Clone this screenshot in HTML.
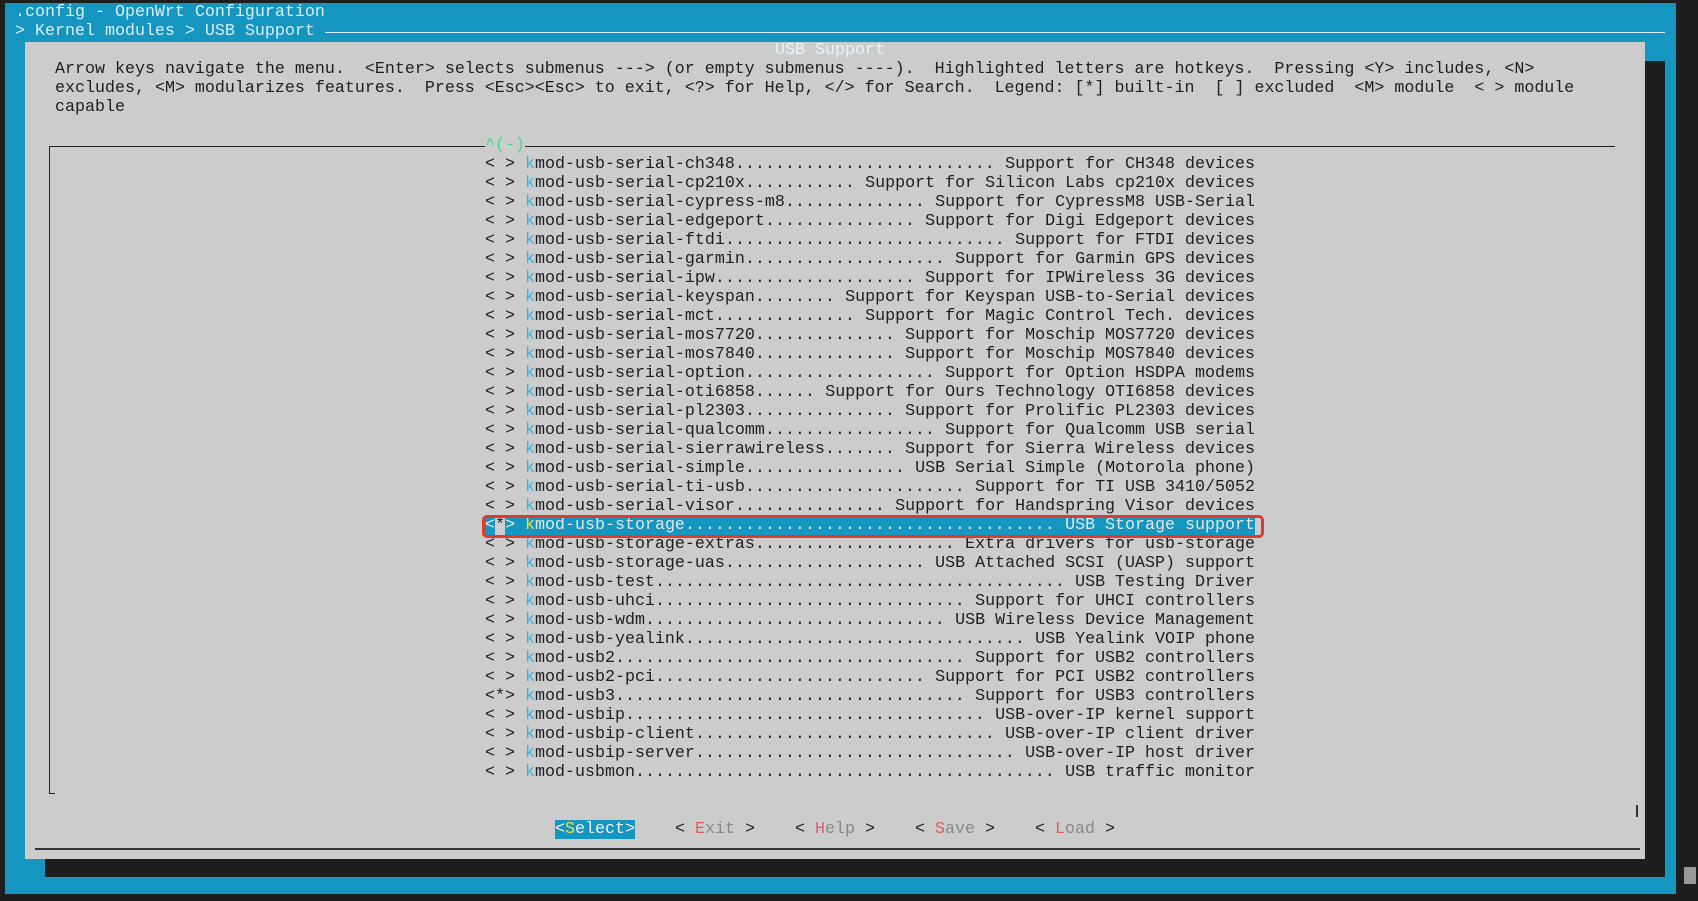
<!DOCTYPE html>
<html><head><meta charset="utf-8"><style>
*{margin:0;padding:0;box-sizing:border-box}
body{width:1698px;height:901px;background:#1e1e1e;position:relative;overflow:hidden;font-family:"Liberation Mono","DejaVu Sans Mono",monospace;font-size:16.67px;line-height:19px;color:#1e1e1e}
.t{position:absolute;white-space:pre;height:19px}
.r{position:absolute;left:485px;width:770px;height:19px;display:flex;white-space:pre}
.r i{font-style:normal;flex:1;overflow:hidden;white-space:nowrap}
.r b{font-weight:normal;color:#3cb0dc}
.lt{color:#d8eef6}
</style></head><body>
<div style="position:absolute;left:5px;top:3px;width:1671px;height:891px;background:#1596c0"></div>
<div style="position:absolute;left:1676px;top:0;width:22px;height:901px;background:#1e1e1e"></div>
<div style="position:absolute;left:1684px;top:867px;width:12px;height:17px;background:#999"></div>
<div class="t lt" style="left:15px;top:3px">.config - OpenWrt Configuration</div>
<div class="t lt" style="left:15px;top:22px">&gt; Kernel modules &gt; USB Support</div>
<div style="position:absolute;left:325px;top:32px;width:1340px;height:1px;background:#d8eef6"></div>
<!-- shadow -->
<div style="position:absolute;left:45px;top:61px;width:1620px;height:816px;background:#1e1e1e"></div>
<!-- dialog -->
<div style="position:absolute;left:25px;top:42px;width:1620px;height:817px;background:#cccccc"></div>
<div style="position:absolute;left:35px;top:848px;width:1605px;height:2px;background:#333"></div>
<div style="position:absolute;left:1636px;top:805px;width:2px;height:12px;background:#333"></div>
<div class="t" style="left:775px;top:41px;color:#e8f4fa">USB Support</div>
<div class="t" style="left:55px;top:60px">Arrow keys navigate the menu.  &lt;Enter&gt; selects submenus ---&gt; (or empty submenus ----).  Highlighted letters are hotkeys.  Pressing &lt;Y&gt; includes, &lt;N&gt;</div>
<div class="t" style="left:55px;top:79px">excludes, &lt;M&gt; modularizes features.  Press &lt;Esc&gt;&lt;Esc&gt; to exit, &lt;?&gt; for Help, &lt;/&gt; for Search.  Legend: [*] built-in  [ ] excluded  &lt;M&gt; module  &lt; &gt; module</div>
<div class="t" style="left:55px;top:98px">capable</div>
<!-- menu box -->
<div style="position:absolute;left:49px;top:146px;width:436px;height:1px;background:#222"></div>
<div style="position:absolute;left:525px;top:146px;width:1090px;height:1px;background:#222"></div>
<div class="t" style="left:485px;top:136px;color:#3fd98a">^(-)</div>
<div style="position:absolute;left:49px;top:146px;width:1px;height:648px;background:#222"></div>
<div style="position:absolute;left:49px;top:793px;width:6px;height:1px;background:#222"></div>

<div class="r" style="top:155px"><span>&lt; &gt; </span><b>k</b>mod-usb-serial-ch348<i>................................................................................</i><span> Support for CH348 devices</span></div>
<div class="r" style="top:174px"><span>&lt; &gt; </span><b>k</b>mod-usb-serial-cp210x<i>................................................................................</i><span> Support for Silicon Labs cp210x devices</span></div>
<div class="r" style="top:193px"><span>&lt; &gt; </span><b>k</b>mod-usb-serial-cypress-m8<i>................................................................................</i><span> Support for CypressM8 USB-Serial</span></div>
<div class="r" style="top:212px"><span>&lt; &gt; </span><b>k</b>mod-usb-serial-edgeport<i>................................................................................</i><span> Support for Digi Edgeport devices</span></div>
<div class="r" style="top:231px"><span>&lt; &gt; </span><b>k</b>mod-usb-serial-ftdi<i>................................................................................</i><span> Support for FTDI devices</span></div>
<div class="r" style="top:250px"><span>&lt; &gt; </span><b>k</b>mod-usb-serial-garmin<i>................................................................................</i><span> Support for Garmin GPS devices</span></div>
<div class="r" style="top:269px"><span>&lt; &gt; </span><b>k</b>mod-usb-serial-ipw<i>................................................................................</i><span> Support for IPWireless 3G devices</span></div>
<div class="r" style="top:288px"><span>&lt; &gt; </span><b>k</b>mod-usb-serial-keyspan<i>................................................................................</i><span> Support for Keyspan USB-to-Serial devices</span></div>
<div class="r" style="top:307px"><span>&lt; &gt; </span><b>k</b>mod-usb-serial-mct<i>................................................................................</i><span> Support for Magic Control Tech. devices</span></div>
<div class="r" style="top:326px"><span>&lt; &gt; </span><b>k</b>mod-usb-serial-mos7720<i>................................................................................</i><span> Support for Moschip MOS7720 devices</span></div>
<div class="r" style="top:345px"><span>&lt; &gt; </span><b>k</b>mod-usb-serial-mos7840<i>................................................................................</i><span> Support for Moschip MOS7840 devices</span></div>
<div class="r" style="top:364px"><span>&lt; &gt; </span><b>k</b>mod-usb-serial-option<i>................................................................................</i><span> Support for Option HSDPA modems</span></div>
<div class="r" style="top:383px"><span>&lt; &gt; </span><b>k</b>mod-usb-serial-oti6858<i>................................................................................</i><span> Support for Ours Technology OTI6858 devices</span></div>
<div class="r" style="top:402px"><span>&lt; &gt; </span><b>k</b>mod-usb-serial-pl2303<i>................................................................................</i><span> Support for Prolific PL2303 devices</span></div>
<div class="r" style="top:421px"><span>&lt; &gt; </span><b>k</b>mod-usb-serial-qualcomm<i>................................................................................</i><span> Support for Qualcomm USB serial</span></div>
<div class="r" style="top:440px"><span>&lt; &gt; </span><b>k</b>mod-usb-serial-sierrawireless<i>................................................................................</i><span> Support for Sierra Wireless devices</span></div>
<div class="r" style="top:459px"><span>&lt; &gt; </span><b>k</b>mod-usb-serial-simple<i>................................................................................</i><span> USB Serial Simple (Motorola phone)</span></div>
<div class="r" style="top:478px"><span>&lt; &gt; </span><b>k</b>mod-usb-serial-ti-usb<i>................................................................................</i><span> Support for TI USB 3410/5052</span></div>
<div class="r" style="top:497px"><span>&lt; &gt; </span><b>k</b>mod-usb-serial-visor<i>................................................................................</i><span> Support for Handspring Visor devices</span></div>
<div class="r" style="top:516px;background:#1596c0;color:#e6e6e6"><span>&lt;<span style="background:#cfcfcf;color:#1e1e1e">*</span>&gt; </span><b style="color:#e8e23a">k</b>mod-usb-storage<i>................................................................................</i><span> USB Storage support</span></div>
<div class="r" style="top:535px"><span>&lt; &gt; </span><b>k</b>mod-usb-storage-extras<i>................................................................................</i><span> Extra drivers for usb-storage</span></div>
<div class="r" style="top:554px"><span>&lt; &gt; </span><b>k</b>mod-usb-storage-uas<i>................................................................................</i><span> USB Attached SCSI (UASP) support</span></div>
<div class="r" style="top:573px"><span>&lt; &gt; </span><b>k</b>mod-usb-test<i>................................................................................</i><span> USB Testing Driver</span></div>
<div class="r" style="top:592px"><span>&lt; &gt; </span><b>k</b>mod-usb-uhci<i>................................................................................</i><span> Support for UHCI controllers</span></div>
<div class="r" style="top:611px"><span>&lt; &gt; </span><b>k</b>mod-usb-wdm<i>................................................................................</i><span> USB Wireless Device Management</span></div>
<div class="r" style="top:630px"><span>&lt; &gt; </span><b>k</b>mod-usb-yealink<i>................................................................................</i><span> USB Yealink VOIP phone</span></div>
<div class="r" style="top:649px"><span>&lt; &gt; </span><b>k</b>mod-usb2<i>................................................................................</i><span> Support for USB2 controllers</span></div>
<div class="r" style="top:668px"><span>&lt; &gt; </span><b>k</b>mod-usb2-pci<i>................................................................................</i><span> Support for PCI USB2 controllers</span></div>
<div class="r" style="top:687px"><span>&lt;*&gt; </span><b>k</b>mod-usb3<i>................................................................................</i><span> Support for USB3 controllers</span></div>
<div class="r" style="top:706px"><span>&lt; &gt; </span><b>k</b>mod-usbip<i>................................................................................</i><span> USB-over-IP kernel support</span></div>
<div class="r" style="top:725px"><span>&lt; &gt; </span><b>k</b>mod-usbip-client<i>................................................................................</i><span> USB-over-IP client driver</span></div>
<div class="r" style="top:744px"><span>&lt; &gt; </span><b>k</b>mod-usbip-server<i>................................................................................</i><span> USB-over-IP host driver</span></div>
<div class="r" style="top:763px"><span>&lt; &gt; </span><b>k</b>mod-usbmon<i>................................................................................</i><span> USB traffic monitor</span></div>

<div style="position:absolute;left:482px;top:515px;width:782px;height:23px;border:3px solid #e03a2a;border-radius:5px"></div>

<div class="t" style="left:555px;top:820px;background:#1596c0;color:#f0f0f0">&lt;<span style="color:#f0e040">S</span>elect&gt;</div>
<div class="t" style="left:675px;top:820px">&lt; <span style="color:#e05a5a">E</span><span style="color:#888">xit</span> &gt;</div>
<div class="t" style="left:795px;top:820px">&lt; <span style="color:#e05a7a">H</span><span style="color:#888">elp</span> &gt;</div>
<div class="t" style="left:915px;top:820px">&lt; <span style="color:#e05a5a">S</span><span style="color:#888">ave</span> &gt;</div>
<div class="t" style="left:1035px;top:820px">&lt; <span style="color:#e05a5a">L</span><span style="color:#888">oad</span> &gt;</div>
</body></html>
